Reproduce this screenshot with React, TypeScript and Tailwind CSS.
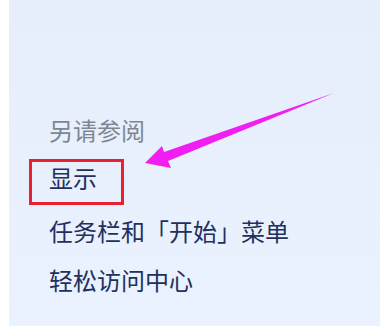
export default function App() {
  return (
    <div className="relative flex h-[326px] w-[380px] overflow-hidden bg-white font-['Noto_Sans_CJK_SC','Noto_Sans',sans-serif]">
      <div className="w-[9px] shrink-0 bg-white" />
      <div className="flex-1 bg-gradient-to-b from-[#e6eefb] to-[#e9f2fe] pl-[20px] pt-[118px]">
        <p className="pl-[20px] text-[24px] leading-[24px] text-[#7d8794]">另请参阅</p>
        <div className="mt-[17px] w-[95px] border-[3px] border-[#e8202f] pb-[12px] pl-[17px] pt-[4px]">
          <p className="text-[24px] leading-[24px] text-[#22305e]">显示</p>
        </div>
        <p className="mt-[14px] pl-[20px] text-[24px] leading-[24px] text-[#22305e]">任务栏和「开始」菜单</p>
        <p className="mt-[25px] pl-[20px] text-[24px] leading-[24px] text-[#22305e]">轻松访问中心</p>
      </div>
      <svg className="pointer-events-none absolute left-0 top-0" width="380" height="326" viewBox="0 0 380 326">
        <polygon
          points="145,163 162,146 164,152 334,93 168,161 171,168"
          fill="#f01ef0"
        />
      </svg>
    </div>
  );
}
